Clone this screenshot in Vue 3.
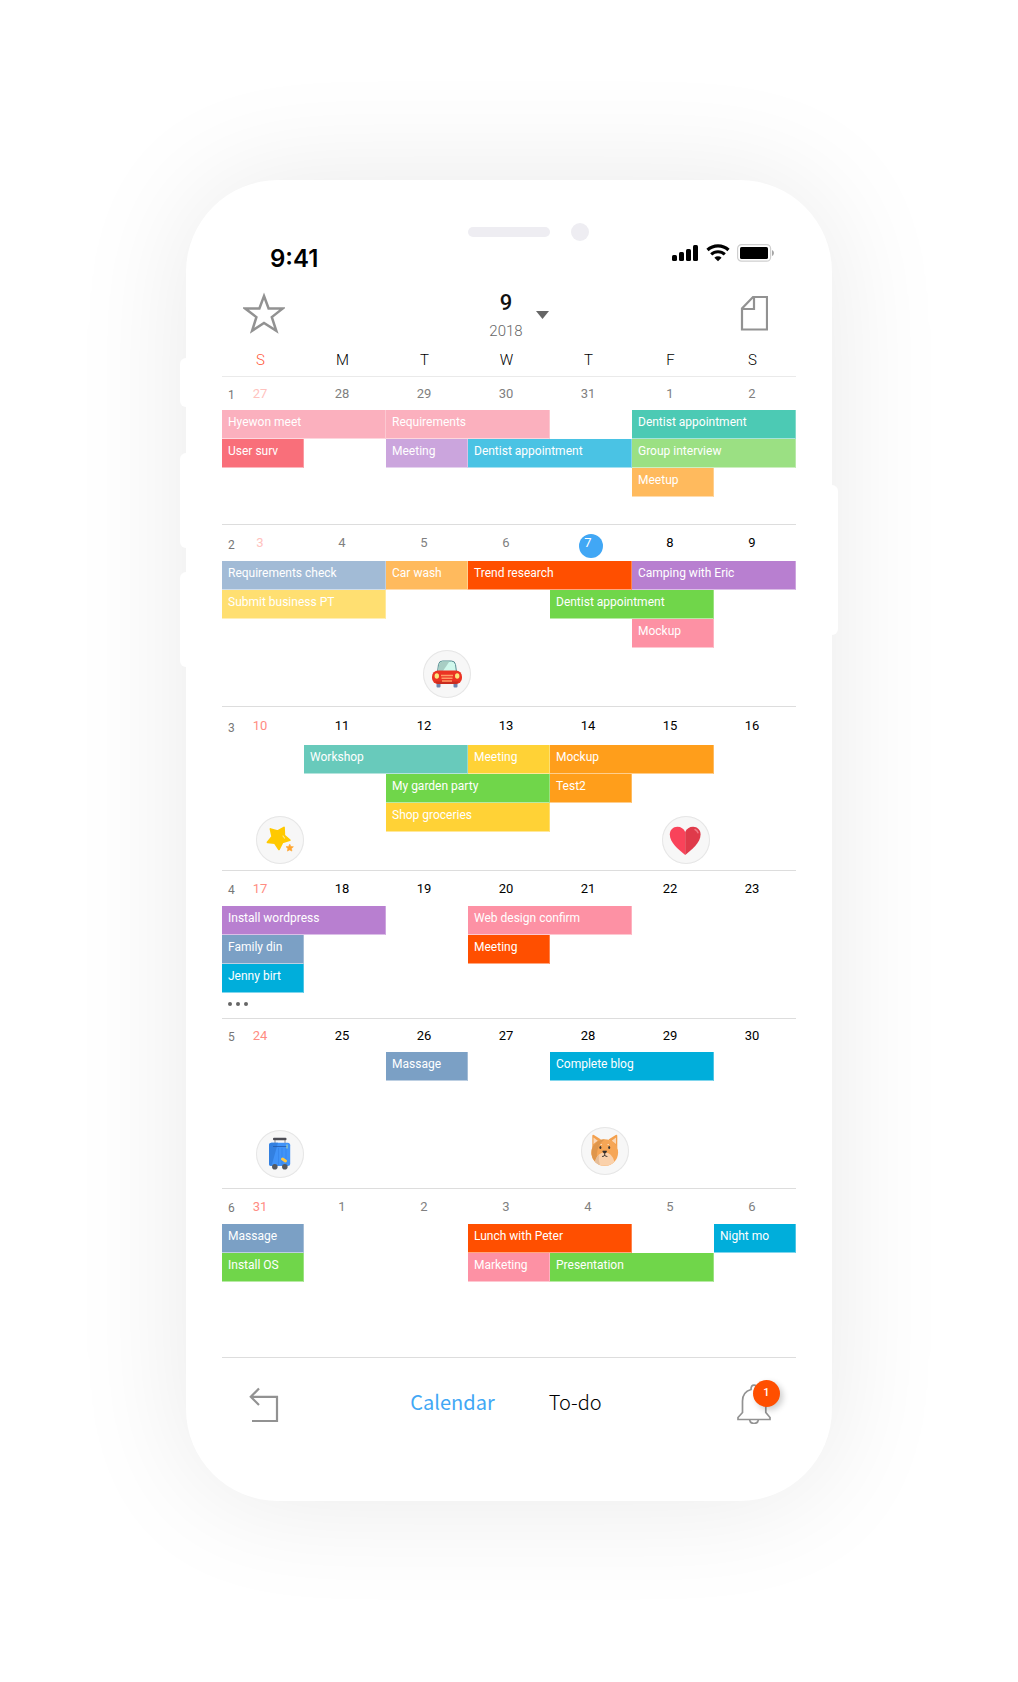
<script setup>
const weekdays = ['S', 'M', 'T', 'W', 'T', 'F', 'S']

const c = {
  rose: '#fbb0be', coral: '#f96f7a', lilac: '#cba5dd', sky: '#4ac3e4', mint: '#4ccab4',
  lime: '#9be083', apricot: '#ffba5d', steel: '#a2bbd6', lemon: '#ffdf71', red: '#ff4f00',
  violet: '#b87fd0', green: '#70d64a', pink: '#fd91a4', teal: '#68cabb', yellow: '#ffd236',
  orange: '#ff9e1b', slate: '#7ba0c5', azure: '#00aedb'
}

// Event tuples: title, first column, column span, lane, colour
const weeks = [
  {
    no: 1, head: 33, foot: 27, days: [27, 28, 29, 30, 31, 1, 2], past: [0, 7],
    events: [
      ['Hyewon meet', 1, 2, 1, c.rose], ['Requirements', 3, 2, 1, c.rose], ['Dentist appointment', 6, 2, 1, c.mint],
      ['User surv', 1, 1, 2, c.coral], ['Meeting', 3, 1, 2, c.lilac], ['Dentist appointment', 4, 2, 2, c.sky],
      ['Group interview', 6, 2, 2, c.lime], ['Meetup', 6, 1, 3, c.apricot]
    ],
    stickers: []
  },
  {
    no: 2, head: 36, foot: 58, days: [3, 4, 5, 6, 7, 8, 9], past: [0, 4], today: 7,
    events: [
      ['Requirements check', 1, 2, 1, c.steel], ['Car wash', 3, 1, 1, c.apricot], ['Trend research', 4, 2, 1, c.red],
      ['Camping with Eric', 6, 2, 1, c.violet], ['Submit business PT', 1, 2, 2, c.lemon],
      ['Dentist appointment', 5, 2, 2, c.green], ['Mockup', 6, 1, 3, c.pink]
    ],
    stickers: [{ kind: 'car', col: 3, right: -3, bottom: 8 }]
  },
  {
    no: 3, head: 38, foot: 38, days: [10, 11, 12, 13, 14, 15, 16], past: [0, 0],
    events: [
      ['Workshop', 2, 2, 1, c.teal], ['Meeting', 4, 1, 1, c.yellow], ['Mockup', 5, 2, 1, c.orange],
      ['My garden party', 3, 2, 2, c.green], ['Test2', 5, 1, 2, c.orange], ['Shop groceries', 3, 2, 3, c.yellow]
    ],
    stickers: [{ kind: 'star', col: 1, right: 0, bottom: 6 }, { kind: 'heart', col: 6, right: 4, bottom: 6 }]
  },
  {
    no: 4, head: 35, foot: 25, days: [17, 18, 19, 20, 21, 22, 23], past: [0, 0], more: true,
    events: [
      ['Install wordpress', 1, 2, 1, c.violet], ['Web design confirm', 4, 2, 1, c.pink],
      ['Family din', 1, 1, 2, c.slate], ['Meeting', 4, 1, 2, c.red], ['Jenny birt', 1, 1, 3, c.azure]
    ],
    stickers: []
  },
  {
    no: 5, head: 33, foot: 49, days: [24, 25, 26, 27, 28, 29, 30], past: [0, 0],
    events: [['Massage', 3, 1, 1, c.slate], ['Complete blog', 5, 2, 1, c.azure]],
    stickers: [{ kind: 'case', col: 1, right: 0, bottom: 10 }, { kind: 'dog', col: 5, right: 3, bottom: 13 }]
  },
  {
    no: 6, head: 35, foot: 46, days: [31, 1, 2, 3, 4, 5, 6], past: [1, 7],
    events: [
      ['Massage', 1, 1, 1, c.slate], ['Lunch with Peter', 4, 2, 1, c.red], ['Night mo', 7, 1, 1, c.azure],
      ['Install OS', 1, 1, 2, c.green], ['Marketing', 4, 1, 2, c.pink], ['Presentation', 5, 2, 2, c.green]
    ],
    stickers: []
  }
]

const isMuted = (week, i) => i >= week.past[0] && i < week.past[1]
</script>

<template>
  <main class="stage">
    <section class="phone">
      <i class="side-key mute"></i>
      <i class="side-key up"></i>
      <i class="side-key down"></i>
      <i class="side-key power"></i>

      <div class="notch"><i class="speaker"></i><i class="camera"></i></div>

      <div class="status">
        <span class="clock">9:41</span>
        <span class="signals">
          <svg width="27" height="18" viewBox="0 0 27 18">
            <rect x="0" y="11" width="5" height="6" rx="1.5" />
            <rect x="7" y="8" width="5" height="9" rx="1.5" />
            <rect x="14" y="5" width="5" height="12" rx="1.5" />
            <rect x="21" y="1" width="5" height="16" rx="1.5" />
          </svg>
          <svg width="24" height="18" viewBox="0 0 24 18">
            <path d="M1.500 6a15.200 15.200 0 0 1 21 0" fill="none" stroke="#000" stroke-width="3.200" />
            <path d="M5.200 10.400a9.800 9.800 0 0 1 13.600 0" fill="none" stroke="#000" stroke-width="3" />
            <path d="M8.400 13.800a5.200 5.200 0 0 1 7.200 0L12 17.200z" />
          </svg>
          <svg width="38" height="18" viewBox="0 0 38 18">
            <rect x=".6" y=".6" width="33" height="16.6" rx="4" fill="none" stroke="#cfcfcf" stroke-width="1.2" />
            <rect x="3" y="3" width="28" height="12" rx="1.6" />
            <path d="M35 6q2 1 2 3t-2 3z" fill="#a5a5a5" />
          </svg>
        </span>
      </div>

      <header class="bar">
        <button class="icon" aria-label="Favourites">
          <svg width="42" height="42" viewBox="0 0 42 42">
            <path d="M21 4l4.600 12.400 14.200.1-11 8.600 4.500 13.700L21 30.900l-11.900 7.900 4.300-13.700-11.200-8.600 14.200-.1z" fill="none" stroke="#929292" stroke-width="2.500" />
          </svg>
        </button>
        <button class="month" aria-label="Choose month">
          <span class="title"><b>9</b><span>2018</span></span>
          <svg width="13" height="8" viewBox="0 0 13 8"><path d="M0 0h13L6.500 8z" fill="#666" /></svg>
        </button>
        <button class="icon" aria-label="Notes">
          <svg width="28" height="36" viewBox="0 0 28 36">
            <path d="M13 2h14v32.500H2V13.500zM14 2v12H2" fill="none" stroke="#929292" stroke-width="2.200" />
          </svg>
        </button>
      </header>

      <div class="weekdays">
        <span v-for="(d, i) in weekdays" :key="i" :class="{ sunday: i === 0 }">{{ d }}</span>
      </div>

      <section
        v-for="week in weeks"
        :key="week.no"
        class="week"
        :style="{ gridTemplateRows: `${week.head}px repeat(3, 29px) ${week.foot}px` }"
      >
        <span class="week-no">{{ week.no }}</span>
        <time
          v-for="(day, i) in week.days"
          :key="i"
          class="day"
          :class="{ muted: isMuted(week, i), sunday: i === 0, today: day === week.today }"
          :style="{ gridColumn: i + 1 }"
        ><span>{{ day }}</span></time>
        <div
          v-for="(e, i) in week.events"
          :key="'e' + i"
          class="event"
          :style="{ gridColumn: `${e[1]} / span ${e[2]}`, gridRow: e[3] + 1, backgroundColor: e[4] }"
        >{{ e[0] }}</div>
        <button v-if="week.more" class="more" aria-label="More events"><i></i><i></i><i></i></button>
        <span
          v-for="s in week.stickers"
          :key="s.kind"
          class="sticker"
          :style="{ gridColumn: s.col, marginRight: `${s.right}px`, marginBottom: `${s.bottom}px` }"
        >
          <svg v-if="s.kind === 'car'" viewBox="0 0 48 48">
            <rect x="13.500" y="31" width="4" height="6.500" rx="1" fill="#7084ad" />
            <rect x="30.500" y="31" width="4" height="6.500" rx="1" fill="#7084ad" />
            <path d="M14.500 22l1-7.500q.6-3.500 4-3.500h9q3.400 0 4 3.500l1 7.500z" fill="#cff8ec" stroke="#568b91" stroke-width="1" />
            <path d="M15.200 21l.9-6.500q.5-2.900 3.500-2.900h6.800L20 21z" fill="#a8cdc4" />
            <rect x="9" y="20.500" width="30" height="13.500" rx="6" fill="#eb3323" />
            <path d="M12 31.500h24q-1.500 2.500-4 2.500H16q-2.500 0-4-2.500z" fill="#c92c1f" />
            <ellipse cx="13.800" cy="26" rx="2.200" ry="2.800" fill="#fbe67c" />
            <ellipse cx="34.200" cy="26" rx="2.200" ry="2.800" fill="#fbe67c" />
            <path d="M18 25.500h12M18.500 28.200h11M19 31h10" stroke="#ff9c66" stroke-width="1.400" />
          </svg>
          <svg v-else-if="s.kind === 'star'" viewBox="0 0 48 48">
            <path d="M14.500 13l7.200 2 6.300-3.500.3 7.800 5.500 4.900-7.300 2.200-3.500 7-4.300-6.300-7.200-.7 4.700-5.900z" fill="#ffc900" stroke="#ffc900" stroke-width="1.800" stroke-linejoin="round" />
            <path d="M27 20l1.500 2" stroke="#ffe58a" stroke-width="1.200" stroke-linecap="round" />
            <path d="M33.800 28.200l1 2.300 2.600.3-1.900 1.800.4 2.500-2.200-1.200-2.300 1.200.5-2.600-1.900-1.800 2.600-.3z" fill="#ffa52e" stroke="#ffa52e" stroke-width=".6" stroke-linejoin="round" />
          </svg>
          <svg v-else-if="s.kind === 'heart'" viewBox="0 0 48 48">
            <path d="M23.200 39C17 34 7.800 26.500 7.800 18.500c0-4.500 3.300-7.700 7.500-7.700 3.700 0 6.600 2 7.900 5.200z" fill="#f9435a" />
            <path d="M23.200 39c6.200-5 15.400-12.500 15.400-20.500 0-4.500-3.300-7.700-7.500-7.700-3.700 0-6.600 2-7.900 5.200z" fill="#df3a4a" />
            <path d="M33 13.500q2.300 1 3 3.300" fill="none" stroke="#f07985" stroke-width="1.400" stroke-linecap="round" />
          </svg>
          <svg v-else-if="s.kind === 'case'" viewBox="0 0 48 48">
            <path d="M19 9.500v4M29 9.500v4" stroke="#8b8b91" stroke-width="1" />
            <rect x="17" y="7.800" width="13.500" height="2.400" rx="1" fill="#4d4d55" />
            <rect x="13" y="12.800" width="21.200" height="23.200" rx="2.500" fill="#4093f8" />
            <path d="M13 15.300q0-2.500 2.500-2.500H22L15.500 36Q13 36 13 33.500z" fill="#3380e0" />
            <path d="M17 16.500h14" stroke="#2459a8" stroke-width=".8" />
            <path d="M22.500 18v17M26 18v17M30 18v17" stroke="#3384ea" stroke-width=".7" />
            <path d="M31 14.500v4" stroke="#a6d2b3" stroke-width="1.200" />
            <path d="M26.500 29l3 2" stroke="#ffc942" stroke-width="3" stroke-linecap="round" />
            <circle cx="18.800" cy="36.800" r="2.800" fill="#555960" />
            <circle cx="28.800" cy="36.800" r="2.800" fill="#555960" />
          </svg>
          <svg v-else viewBox="0 0 48 48">
            <path d="M11.300 21V9q0-1.600 1.600-1L20 12.500zM36.300 21V9q0-1.600-1.600-1L27.500 12.500z" fill="#f3a04e" />
            <path d="M12.500 17v-6.500l4.300 3.300zM35 17v-6.500l-4.300 3.300z" fill="#fad8b7" />
            <circle cx="23.700" cy="25.600" r="13.400" fill="#f6a656" />
            <path d="M23.700 12.200a13.400 13.400 0 0 0-6 25.300Q12 22 23.700 12.200z" fill="#df964c" />
            <path d="M14 34.700q2.500-9.200 9.700-9.200t9.700 9.200a13.400 13.400 0 0 1-19.400 0z" fill="#fad1ab" />
            <path d="M14 34.700q1.200-4.700 4-7.200-.8 5 1 10.700a13 13 0 0 1-5-3.500z" fill="#e5bd98" />
            <ellipse cx="19.400" cy="20.500" rx="1" ry="1.600" fill="#3a3532" />
            <ellipse cx="28.200" cy="20.500" rx="1" ry="1.600" fill="#3a3532" />
            <path d="M21.700 24h4l-1 2h-2z" fill="#332e2b" stroke="#332e2b" stroke-width=".6" />
            <path d="M23.700 26v2.200M21 29.500q2.700 0 2.700-1.600 0 1.600 2.700 1.600" fill="none" stroke="#332e2b" stroke-width=".9" />
            <path d="M19.500 17.500h1.500M26.500 17.500H28" stroke="#fad8b7" stroke-width="1.200" />
          </svg>
        </span>
      </section>

      <nav class="tabs">
        <button class="icon" aria-label="Back">
          <svg width="30" height="36" viewBox="0 0 30 36">
            <path d="M10 2.500L1.800 10.800 10 19M1.800 10.800H28V35H3" fill="none" stroke="#929292" stroke-width="2.200" />
          </svg>
        </button>
        <div class="links">
          <a href="#calendar" class="active" aria-current="page">Calendar</a>
          <a href="#todo">To-do</a>
        </div>
        <button class="icon bell" aria-label="Notifications">
          <svg width="34" height="40" viewBox="0 0 34 40">
            <path d="M1 35.500v-2l4.500-5V17Q5.500 8 14 5.500 14 1.200 17 1.200T20 5.500Q28.800 8 28.800 17v11.500l4.200 5v2zM12.500 35.500q.7 4 4.500 4t4.500-4" fill="none" stroke="#929292" stroke-width="1.700" />
          </svg>
          <span class="badge">1</span>
        </button>
      </nav>
    </section>
  </main>
</template>

<style>
body {
  margin: 0;
  background: #fff;
}
</style>

<style scoped>
.stage {
  padding: 180px 24px;
  font-family: Roboto, "Liberation Sans", sans-serif;
}

.phone {
  position: relative;
  box-sizing: border-box;
  max-width: 646px;
  margin: 0 auto;
  padding: 43px 36px 51px;
  border-radius: 92px;
  background: #fff;
  box-shadow: 0 0 120px rgba(0, 0, 0, 0.09);
}

button {
  margin: 0;
  padding: 0;
  border: 0;
  background: none;
  font: inherit;
  color: inherit;
}

svg {
  display: block;
}

.side-key {
  position: absolute;
  left: -6px;
  width: 12px;
  height: 95px;
  border-radius: 6px;
  background: #fff;
}

.side-key.mute {
  top: 178px;
  height: 49px;
}

.side-key.up {
  top: 273px;
}

.side-key.down {
  top: 392px;
}

.side-key.power {
  top: 305px;
  right: -6px;
  left: auto;
  height: 150px;
}

.notch {
  display: grid;
  grid-template-columns: 1fr 82px 1fr;
  gap: 21px;
  align-items: center;
}

.speaker {
  grid-column: 2;
  height: 10px;
  border-radius: 5px;
  background: #eeedf2;
}

.camera {
  width: 18px;
  height: 18px;
  border-radius: 50%;
  background: #eeedf2;
}

.status {
  display: flex;
  justify-content: space-between;
  align-items: flex-start;
  height: 34px;
  padding: 0 21px 0 48px;
}

.clock {
  font: 600 24px/36px Inter, sans-serif;
  color: #000;
}

.signals {
  display: flex;
  gap: 7px;
  padding-top: 3px;
}

.bar {
  display: flex;
  justify-content: space-between;
  align-items: flex-start;
  padding-top: 14px;
}

.icon {
  display: grid;
  place-items: center;
  width: 84px;
  height: 48px;
}

.month {
  display: flex;
  align-items: center;
  gap: 10px;
  padding-left: 17px;
}

.month svg {
  margin-bottom: 4px;
}

.title {
  width: 40px;
  line-height: 28px;
  font-size: 15px;
  font-weight: 300;
  color: #666;
}

.title b {
  display: block;
  font-size: 22px;
  font-weight: 500;
  color: #111;
}

.weekdays {
  display: grid;
  grid-template-columns: repeat(7, 1fr);
  height: 31px;
  font-size: 15px;
  font-weight: 300;
  line-height: 31px;
  text-align: center;
  color: #000;
}

.weekdays span {
  padding-right: 5px;
}

.weekdays .sunday {
  color: #ff5a3c;
}

.week {
  display: grid;
  grid-template-columns: repeat(7, 1fr);
  border-top: 1px solid #ddd;
}

.weekdays + .week {
  border-top-color: #eaeaea;
}

.week-no {
  grid-area: 1 / 1;
  align-self: center;
  padding: 3px 0 0 6px;
  font-size: 12px;
  line-height: 16px;
  color: #777;
}

.day {
  grid-row: 1;
  align-self: center;
  padding-right: 6px;
  font-size: 13px;
  line-height: 18px;
  text-align: center;
  color: #000;
}

.day.muted {
  color: #808080;
}

.day.sunday {
  color: #ff8c82;
}

.day.sunday.muted {
  color: #ffc2be;
}

.day.today {
  position: relative;
  z-index: 0;
  color: #fff;
}

.day.today::before {
  content: "";
  position: absolute;
  z-index: -1;
  top: 0;
  left: calc(50% - 12px);
  width: 24px;
  height: 24px;
  border-radius: 50%;
  background: #41a7f5;
}

.event {
  box-sizing: border-box;
  height: 29px;
  padding-left: 6px;
  overflow: hidden;
  border-right: 1px solid rgba(255, 255, 255, 0.3);
  border-bottom: 1px solid rgba(255, 255, 255, 0.5);
  font-size: 12px;
  line-height: 24px;
  white-space: nowrap;
  color: #fff;
}

.more {
  grid-area: 5 / 1;
  justify-self: start;
  align-self: start;
  display: flex;
  gap: 4px;
  padding: 9px 6px;
}

.more i {
  width: 4px;
  height: 4px;
  border-radius: 50%;
  background: #666;
}

.sticker {
  grid-row: 2 / -1;
  place-self: end;
  box-sizing: border-box;
  width: 48px;
  height: 48px;
  border-radius: 50%;
  background: #f7f7f7;
  box-shadow: inset 0 0 0 1px #e6e6e6;
}

.tabs {
  display: flex;
  justify-content: space-between;
  align-items: center;
  height: 92px;
  border-top: 1px solid #ddd;
}

.links {
  display: flex;
  gap: 54px;
  margin-right: 6px;
  padding-bottom: 4px;
  font-family: "Noto Sans CJK KR", "Noto Sans", sans-serif;
  font-size: 20px;
  font-weight: 300;
  line-height: 32px;
}

.links a {
  color: #000;
  text-decoration: none;
}

.links .active {
  font-weight: 400;
  color: #41a7f5;
}

.bell {
  position: relative;
}

.badge {
  position: absolute;
  top: 0;
  left: 41px;
  width: 27px;
  height: 27px;
  border-radius: 50%;
  background: #ff4f00;
  box-shadow: 3px 3px 6px rgba(0, 0, 0, 0.2);
  font-size: 11px;
  font-weight: 500;
  line-height: 25px;
  text-align: center;
  color: #fff;
}
</style>
